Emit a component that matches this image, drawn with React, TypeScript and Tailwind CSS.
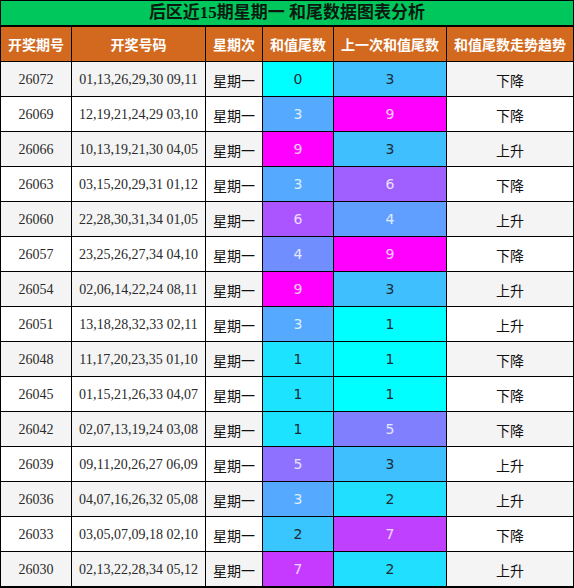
import React from "react";

type Row = { id: string; nums: string; a: number; b: number; trend: string };

const rows: Row[] = [
  { id: "26072", nums: "01,13,26,29,30 09,11", a: 0, b: 3, trend: "下降" },
  { id: "26069", nums: "12,19,21,24,29 03,10", a: 3, b: 9, trend: "下降" },
  { id: "26066", nums: "10,13,19,21,30 04,05", a: 9, b: 3, trend: "上升" },
  { id: "26063", nums: "03,15,20,29,31 01,12", a: 3, b: 6, trend: "下降" },
  { id: "26060", nums: "22,28,30,31,34 01,05", a: 6, b: 4, trend: "上升" },
  { id: "26057", nums: "23,25,26,27,34 04,10", a: 4, b: 9, trend: "下降" },
  { id: "26054", nums: "02,06,14,22,24 08,11", a: 9, b: 3, trend: "上升" },
  { id: "26051", nums: "13,18,28,32,33 02,11", a: 3, b: 1, trend: "上升" },
  { id: "26048", nums: "11,17,20,23,35 01,10", a: 1, b: 1, trend: "下降" },
  { id: "26045", nums: "01,15,21,26,33 04,07", a: 1, b: 1, trend: "下降" },
  { id: "26042", nums: "02,07,13,19,24 03,08", a: 1, b: 5, trend: "下降" },
  { id: "26039", nums: "09,11,20,26,27 06,09", a: 5, b: 3, trend: "上升" },
  { id: "26036", nums: "04,07,16,26,32 05,08", a: 3, b: 2, trend: "上升" },
  { id: "26033", nums: "03,05,07,09,18 02,10", a: 2, b: 7, trend: "下降" },
  { id: "26030", nums: "02,13,22,28,34 05,12", a: 7, b: 2, trend: "上升" },
];

function heat(v: number, min: number, max: number) {
  const t = (v - min) / (max - min);
  const r = Math.round(255 * t);
  const g = Math.round(255 * (1 - t));
  return {
    bg: `rgb(${r},${g},255)`,
    light: t > 0.3,
  };
}

const serif = "font-['Liberation_Serif','Noto_Sans_CJK_SC',serif]";
const cjk = "font-['Noto_Sans_CJK_SC',sans-serif]";
const dv = "font-['DejaVu_Sans',sans-serif]";

function HeatCell({ v, min, max }: { v: number; min: number; max: number }) {
  const h = heat(v, min, max);
  return (
    <div
      className={`h-[34px] flex items-center justify-center text-[14px] ${dv} ${
        h.light ? "text-white/80" : "text-[#1b2b33]"
      }`}
      style={{ backgroundColor: h.bg }}
    >
      {v}
    </div>
  );
}

export default function App() {
  const headers = ["开奖期号", "开奖号码", "星期次", "和值尾数", "上一次和值尾数", "和值尾数走势趋势"];
  return (
    <div className="w-[574px] bg-black px-px pt-px pb-[2px] flex flex-col">
      <div
        className={`h-[24px] mb-[2px] bg-[#00c75b] flex items-center justify-center text-[17px] font-bold text-[#0b1a10] ${serif}`}
      >
        后区近15期星期一 和尾数据图表分析
      </div>
      <div className="grid grid-cols-[70px_133px_56px_70px_112px_126px] gap-px">
        {headers.map((h) => (
          <div
            key={h}
            className={`h-[34px] bg-[#d2691e] flex items-center justify-center text-[14px] font-bold text-white ${cjk}`}
          >
            {h}
          </div>
        ))}
        {rows.map((r, i) => {
          const bg = i % 2 === 0 ? "bg-[#f4f4f4]" : "bg-white";
          return (
            <React.Fragment key={r.id}>
              <div className={`h-[34px] ${bg} flex items-center justify-center text-[14px] text-[#2a2a2a] ${serif}`}>
                {r.id}
              </div>
              <div className={`h-[34px] ${bg} flex items-center justify-center text-[14px] text-[#2a2a2a] ${serif}`}>
                {r.nums}
              </div>
              <div className={`h-[34px] ${bg} flex items-center justify-center pt-[3px] text-[14px] text-[#111] ${cjk}`}>
                星期一
              </div>
              <HeatCell v={r.a} min={0} max={9} />
              <HeatCell v={r.b} min={1} max={9} />
              <div className={`h-[34px] ${bg} flex items-center justify-center pt-[2px] text-[14px] text-[#111] ${cjk}`}>
                {r.trend}
              </div>
            </React.Fragment>
          );
        })}
      </div>
    </div>
  );
}
